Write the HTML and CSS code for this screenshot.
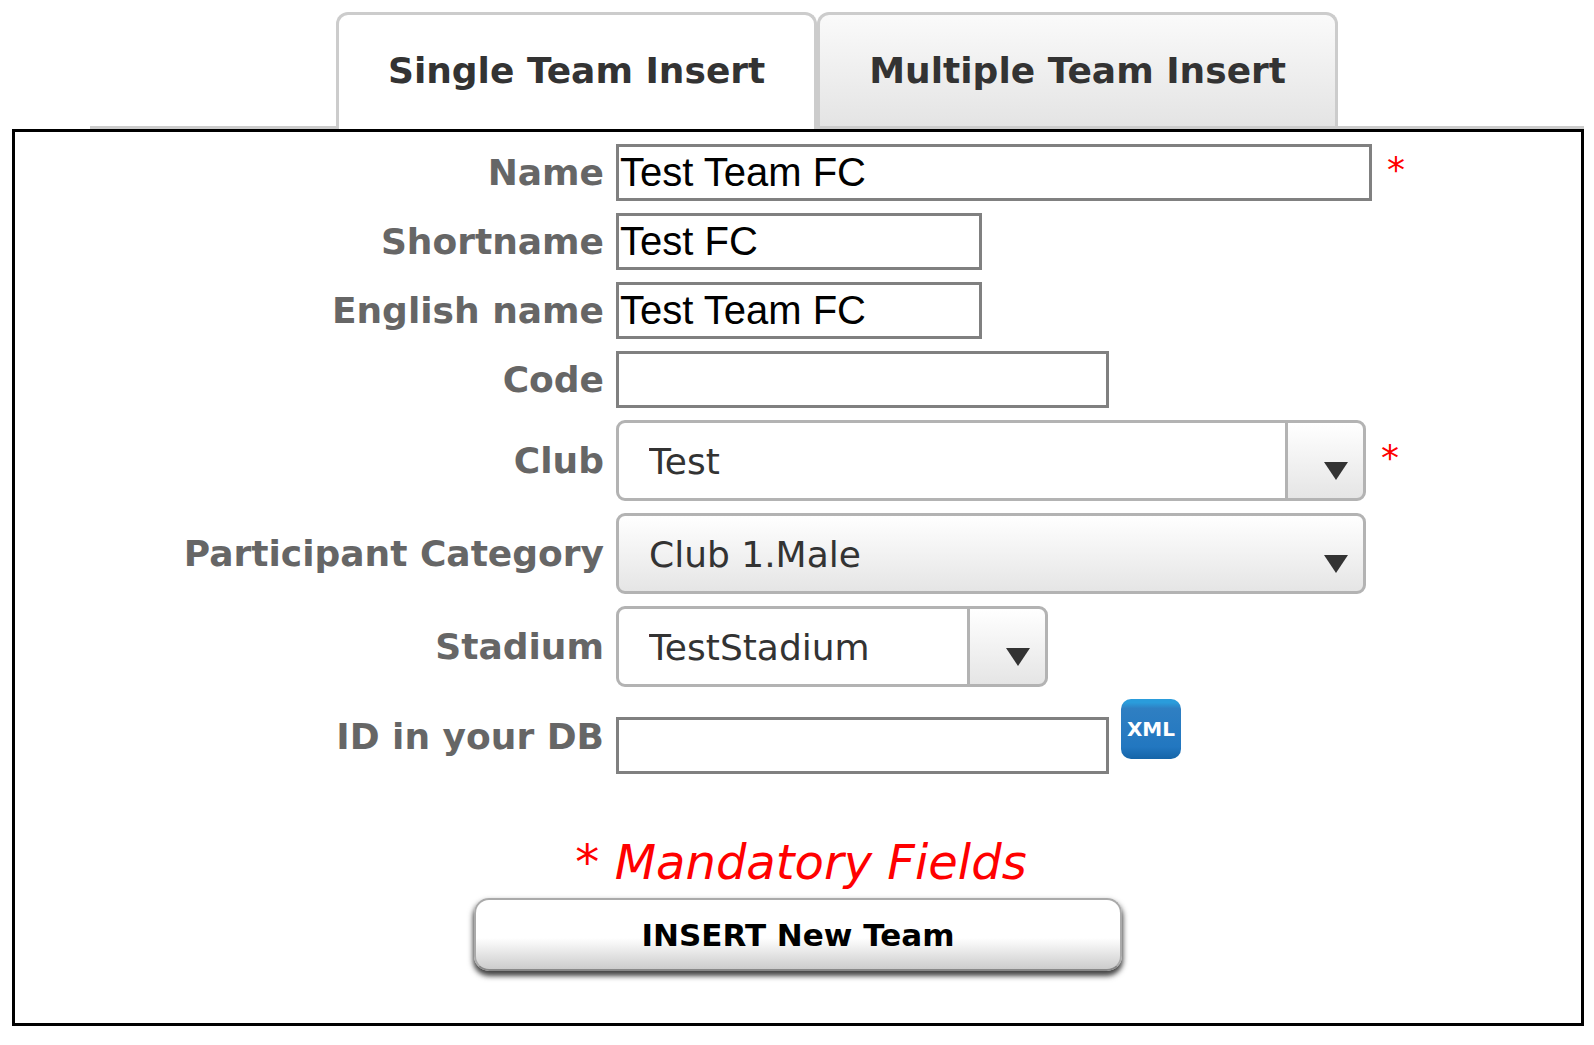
FILE: index.html
```html
<!DOCTYPE html>
<html lang="en">
<head>
<meta charset="utf-8">
<title>Team Insert</title>
<link rel="stylesheet" href="styles.css">
</head>
<body>
<nav class="tabs">
  <a class="tab tab-active" href="#single">Single Team Insert</a>
  <a class="tab" href="#multiple">Multiple Team Insert</a>
</nav>
<form class="panel" id="single">
  <div class="row">
    <label class="label" for="name">Name</label>
    <div class="field">
      <input class="text wide" id="name" type="text" value="Test Team FC">
      <span class="required">*</span>
    </div>
  </div>
  <div class="row">
    <label class="label" for="shortname">Shortname</label>
    <div class="field"><input class="text narrow" id="shortname" type="text" value="Test FC"></div>
  </div>
  <div class="row">
    <label class="label" for="english">English name</label>
    <div class="field"><input class="text narrow" id="english" type="text" value="Test Team FC"></div>
  </div>
  <div class="row">
    <label class="label" for="code">Code</label>
    <div class="field"><input class="text medium" id="code" type="text"></div>
  </div>
  <div class="row">
    <label class="label" for="club">Club</label>
    <div class="field">
      <div class="picker picker-wide">
        <select class="select split" id="club"><option>Test</option></select>
        <svg class="arrow" viewBox="0 0 24 18"><path d="M0 0H24L12 18Z"/></svg>
      </div>
      <span class="required">*</span>
    </div>
  </div>
  <div class="row">
    <label class="label" for="category">Participant Category</label>
    <div class="field">
      <div class="picker picker-wide">
        <select class="select" id="category"><option>Club 1.Male</option></select>
        <svg class="arrow" viewBox="0 0 24 18"><path d="M0 0H24L12 18Z"/></svg>
      </div>
    </div>
  </div>
  <div class="row">
    <label class="label" for="stadium">Stadium</label>
    <div class="field">
      <div class="picker picker-narrow">
        <select class="select split" id="stadium"><option>TestStadium</option></select>
        <svg class="arrow" viewBox="0 0 24 18"><path d="M0 0H24L12 18Z"/></svg>
      </div>
    </div>
  </div>
  <div class="row">
    <label class="label" for="dbid">ID in your DB</label>
    <div class="field field-id">
      <input class="text medium" id="dbid" type="text">
      <span class="xml">XML</span>
    </div>
  </div>
  <p class="note">* <em>Mandatory Fields</em></p>
  <button class="submit" type="button">INSERT New Team</button>
</form>
</body>
</html>
```
FILE: styles.css
```css
* { box-sizing: border-box; }

body {
  margin: 12px 10px 12px 12px;
  background: #fff;
  color: #333;
  font: 36px/44px Verdana, "DejaVu Sans", sans-serif;
}

.tabs {
  display: flex;
  justify-content: center;
  margin-left: 78px;
  border-bottom: 3px solid #ccc;
}

.tab {
  height: 114px;
  padding: 34px 49px 0;
  border: 3px solid #ccc;
  border-bottom: 0;
  border-radius: 12px 12px 0 0;
  background: linear-gradient(#fafafa, #e4e4e4);
  color: #333;
  font-weight: bold;
  text-decoration: none;
}

.tab-active {
  height: 117px;
  margin-bottom: -3px;
  background: #fff;
}

.panel {
  display: flex;
  flex-direction: column;
  gap: 12px;
  padding: 12px 0 52px;
  border: 3px solid #000;
}

.row {
  display: grid;
  grid-template-columns: 589fr 965fr;
  gap: 12px;
  align-items: center;
}

.label {
  color: #666;
  font-weight: bold;
  text-align: right;
}

.field {
  display: flex;
  gap: 12px;
  align-items: center;
}

.text {
  height: 57px;
  padding: 0 1px;
  border: 3px solid #808080;
  background: #fff;
  color: #000;
  font: 40px/48px Arial, "Liberation Sans", sans-serif;
}

.narrow { width: 366px; }
.medium { width: 493px; }
.wide { width: 756px; }

.required {
  padding: 0 0 6px 3px;
  color: #f00;
}

.picker { position: relative; }
.picker-wide { width: 750px; }
.picker-narrow { width: 432px; }

.select {
  display: block;
  width: 100%;
  height: 81px;
  padding: 2px 96px 0 30px;
  appearance: none;
  border: 3px solid #b3b3b3;
  border-radius: 9px;
  background: linear-gradient(#fff, #e5e5e5);
  color: #333;
  font: inherit;
}

.split {
  background:
    linear-gradient(#fff, #e5e5e5) right / 75px 100% no-repeat,
    linear-gradient(#b3b3b3, #b3b3b3) right / 78px 100% no-repeat,
    #fff;
}

.arrow {
  position: absolute;
  top: 42px;
  right: 18px;
  width: 24px;
  height: 18px;
  fill: #333;
  pointer-events: none;
}

.field-id {
  height: 75px;
  align-items: flex-end;
}

.xml {
  align-self: flex-start;
  width: 60px;
  height: 60px;
  border-radius: 10px;
  background: linear-gradient(#2a9cdb 0, #2a9cdb 6%, #2f7fc2 16%, #2277c0 80%, #1565a8);
  color: #fff;
  font-size: 20px;
  font-weight: bold;
  line-height: 60px;
  text-align: center;
}

.note {
  margin: 52px 0 0;
  padding-left: 6px;
  color: #f00;
  font-size: 48px;
  line-height: 48px;
  text-align: center;
}

.submit {
  align-self: center;
  width: 648px;
  height: 73px;
  border: 2px solid #aaa;
  border-bottom-color: #888;
  border-radius: 15px;
  background: linear-gradient(#fff 55%, #ccc);
  box-shadow: 0 4px 5px #444, 0 4px 6px 1px #aaa;
  color: #000;
  font: bold 31px/36px Verdana, "DejaVu Sans", sans-serif;
}
```
